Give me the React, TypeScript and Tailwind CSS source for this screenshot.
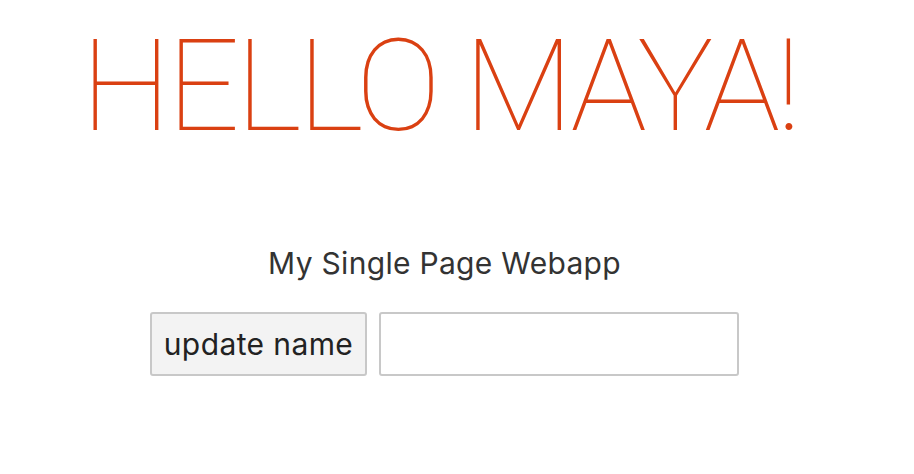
import React, { useState } from "react";

const App: React.FC = () => {
  const [name, setName] = useState<string>("Maya");
  const [draft, setDraft] = useState<string>("");

  return (
    <div className="w-[889px] bg-white text-center font-['Inter',Arial,sans-serif]">
      <h1 className="pt-[16px] pr-[11px] text-[128px] leading-[140px] font-thin tracking-[-4px] text-[#da4012] font-['Roboto',sans-serif] uppercase">
        Hello {name}!
      </h1>

      <p className="mt-[91px] text-[30px] leading-[32px] tracking-[0.3px] text-[#333333]">
        My Single Page Webapp
      </p>

      <div className="mt-[33px] flex justify-center gap-[12px]">
        <button
          className="h-[64px] w-[217px] rounded-[3px] border-2 border-[#c8c8c8] bg-[#f3f3f3] text-[30px] tracking-[0.4px] text-[#222222]"
          onClick={() => draft && setName(draft)}
        >
          update name
        </button>
        <input
          className="h-[64px] w-[360px] rounded-[3px] border-2 border-[#c8c8c8] bg-white px-3 text-[30px] outline-none"
          value={draft}
          onChange={(e) => setDraft(e.target.value)}
        />
      </div>
    </div>
  );
};

export default App;
